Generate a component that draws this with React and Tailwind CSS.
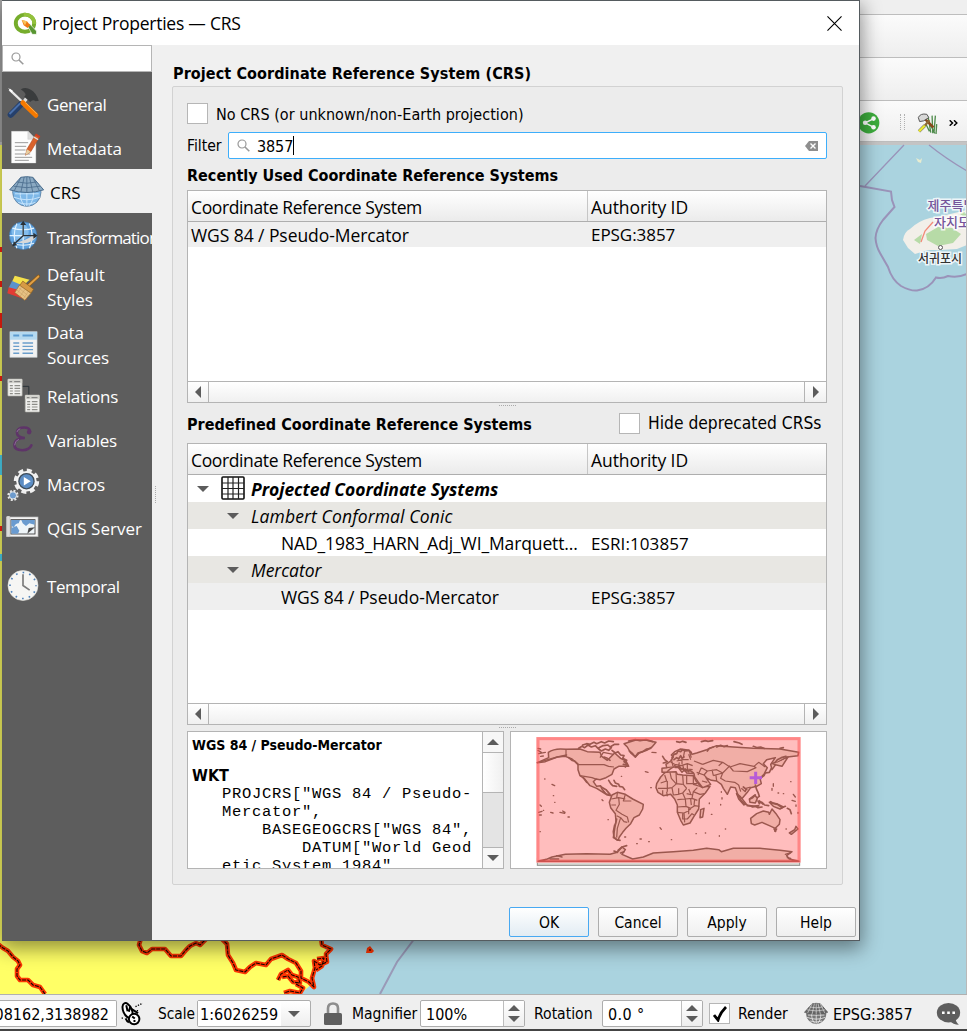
import React from "react";

const UI = "font-['Open_Sans','Noto_Sans',sans-serif]";
const TA = "font-['DejaVu_Sans_Condensed','DejaVu_Sans',sans-serif] [font-stretch:condensed]";

/* ---------- sidebar icons, 3 units per pixel ---------- */
function Tools() {
  return (
    <svg viewBox="18 258 104 102" className="w-[35px] h-[34px]">
      <path d="M28 269 L80 318" stroke="#e9e9e9" strokeWidth="7" />
      <path d="M24 264 l14 8 -4 6z" fill="#fff" />
      <path d="M68 310 L86 286" stroke="#ddd" strokeWidth="10" />
      <path d="M62 268 Q76 260 92 269 Q108 278 116 302 L106 304 Q98 296 90 306 L72 290 Q84 284 62 268Z" fill="#3a3c3d" />
      <path d="M32 344 L62 313" stroke="#26406b" strokeWidth="19" strokeLinecap="round" />
      <path d="M28 342 L60 310" stroke="#4a70ab" strokeWidth="6" />
      <path d="M68 308 L107 346" stroke="#f57900" strokeWidth="15" strokeLinecap="round" />
      <path d="M76 308 L110 342" stroke="#ffb14d" strokeWidth="3" />
    </svg>
  );
}
function Doc() {
  return (
    <svg viewBox="18 390 104 102" className="w-[35px] h-[34px]">
      <path d="M34 394 H84 L107 418 V489 H34Z" fill="#fcfcfc" stroke="#e0e0e0" />
      <path d="M83 394 V418 H107Z" fill="#ddd" stroke="#bbb" />
      <path d="M44 428 H84 M44 439 H78 M44 450 H76 M44 462 H90 M44 472 H96 M44 481 H86" stroke="#9b9b9b" strokeWidth="3" />
      <path d="M76 466 L80 448 L106 404 L118 411 L92 455Z" fill="#d9622b" stroke="#a8441c" strokeWidth="1.5" />
      <path d="M76 466 L80 448 L92 455Z" fill="#e6cfa2" />
      <path d="M101 411 L114 419" stroke="#ddd" strokeWidth="4" />
      <path d="M106 403 l13 8" stroke="#cf3d23" strokeWidth="6" />
    </svg>
  );
}
function CrsGlobe({ gray }) {
  const a = gray ? "#777" : "#7eb8e8";
  const b = gray ? "#666" : "#8aa9c2";
  const s = gray ? "#565656" : "#4a6c8d";
  const l = gray ? "#ededed" : "#d3ecff";
  return (
    <svg viewBox="24 524 106 98" className={gray ? "w-[24px] h-[23px]" : "w-[35px] h-[33px]"}>
      <circle cx="78" cy="575" r="43" fill={a} stroke={s} strokeWidth="2" />
      <path d="M38 590 Q78 606 118 590 M52 606 Q78 616 104 606 M78 570 V617 M58 572 Q56 600 72 617 M98 572 Q100 600 84 617 M42 580 H114" fill="none" stroke={l} strokeWidth={gray ? 3.5 : 2.5} />
      <path d="M60 530 Q78 526 96 530 L129 568 Q104 576 78 576 Q52 576 26 568Z" fill={b} stroke={s} strokeWidth="3" />
      <path d="M48 544 Q78 552 108 544 M38 557 Q78 566 118 557 M70 529 L60 575 M86 529 L96 575 M78 529 V576 M60 530 L40 571 M96 530 L116 571" fill="none" stroke={gray ? "#dcdcdc" : s} strokeWidth={gray ? 3 : 2.5} />
    </svg>
  );
}
function Transform() {
  return (
    <svg viewBox="20 12 100 96" className="w-[33px] h-[32px]">
      <circle cx="69" cy="59" r="42" fill="#5ea0dc" stroke="#3d6c9c" strokeWidth="2" />
      <circle cx="60" cy="48" r="26" fill="#9fd0f7" opacity=".6" />
      <path d="M28 59 H110 M36 36 Q69 46 102 36 M36 82 Q69 94 102 82 M69 18 V100 M50 22 Q34 58 50 97 M88 22 Q104 58 88 97" fill="none" stroke="#e2f3ff" strokeWidth="3.5" />
      <path d="M46 80 Q76 74 96 60 L110 60 Q98 82 70 82Z" fill="#d8d8d8" />
      <path d="M69 24 V59 L44 82 M69 59 H106" fill="none" stroke="#2a3238" strokeWidth="4" />
      <path d="M69 14 l9 13 h-18z M113 59 l-13 9 v-18z M36 91 l5 -15 10 12z" fill="#2a3238" />
    </svg>
  );
}
function Brush() {
  return (
    <svg viewBox="16 170 104 86" className="w-[35px] h-[29px]">
      <path d="M42 178 L86 190 L62 212 L34 196Z" fill="#f4e04a" />
      <path d="M34 194 L64 206 L50 222 L24 214Z" fill="#5b93cc" />
      <path d="M24 212 L52 220 L78 250 L20 230Z" fill="#e23b34" />
      <path d="M82 208 L112 180" stroke="#8a5713" strokeWidth="10" strokeLinecap="round" />
      <path d="M82 208 L112 180" stroke="#e0a047" strokeWidth="6" strokeLinecap="round" />
      <path d="M66 194 L98 218 L90 230 L56 208Z" fill="#d69a45" stroke="#8f601e" strokeWidth="2" />
      <path d="M56 206 L90 230 L72 251 L42 228Z" fill="#e7c184" stroke="#9c6f2d" strokeWidth="2" />
      <path d="M54 214 l26 22 M48 220 l26 22 M62 212 l-12 18 M72 219 l-14 20 M82 226 l-14 20" stroke="#c39a60" strokeWidth="1.5" />
    </svg>
  );
}
function TableIcon() {
  return (
    <svg viewBox="22 342 94 90" className="w-[31px] h-[30px]">
      <rect x="28" y="347" width="82" height="77" fill="#f2f2f2" stroke="#cfd6da" strokeWidth="2" />
      <rect x="28" y="347" width="82" height="24" fill="#b4d9f0" />
      <path d="M38 358 H56 M66 358 H98" stroke="#5b9bd0" strokeWidth="6" />
      <path d="M38 381 H56 M66 381 H98 M38 391 H56 M66 391 H98 M38 401 H56 M66 401 H98 M38 412 H56 M66 412 H98" stroke="#6b9ecb" strokeWidth="4" />
    </svg>
  );
}
function Sheet() {
  return (
    <>
      <rect x="23" y="491" width="43" height="51" rx="2" fill="#f0f0ee" stroke="#a5a59d" strokeWidth="2" />
      <path d="M23 498 H66" stroke="#d4d4ce" strokeWidth="11" />
      <path d="M28 499 H36 M42 499 H60" stroke="#777" strokeWidth="3" />
      <path d="M29 511 H38 M43 511 H60 M29 519 H38 M43 519 H60 M29 527 H38 M43 527 H60 M29 535 H38 M43 535 H60" stroke="#8d8d88" strokeWidth="3.5" />
    </>
  );
}
function Relations() {
  return (
    <svg viewBox="18 488 104 108" className="w-[35px] h-[36px]">
      <path d="M66 513 H86 V540" fill="none" stroke="#2b3338" strokeWidth="3" />
      <Sheet />
      <g transform="translate(52 48)"><Sheet /></g>
    </svg>
  );
}
function Variables() {
  return (
    <svg viewBox="32 32 76 84" className="w-[25px] h-[28px]">
      <path d="M90 48 Q88 36 72 36 Q52 36 50 50 Q49 65 74 68 Q44 68 42 88 Q42 105 66 105 Q88 105 94 90" fill="none" stroke="#5e3468" strokeWidth="8" strokeLinecap="round" />
      <circle cx="87" cy="50" r="7" fill="#5e3468" />
      <path d="M43 90 Q44 76 56 72 M50 50 Q52 42 60 40" fill="none" stroke="#a488ad" strokeWidth="2" />
    </svg>
  );
}
function Macros() {
  return (
    <svg viewBox="16 150 106 106" className="w-[35px] h-[35px]">
      <circle cx="78" cy="193" r="33" fill="none" stroke="#efefef" strokeWidth="11" strokeDasharray="15 10.92" />
      <circle cx="78" cy="193" r="31" fill="#f3f3f3" />
      <circle cx="78" cy="193" r="23" fill="#5c8dc4" stroke="#3e4b57" strokeWidth="4" />
      <path d="M70 180 L91 193 L70 206Z" fill="#fff" />
      <circle cx="37" cy="236" r="14" fill="none" stroke="#e8e8e8" strokeWidth="6" strokeDasharray="6 5" />
      <circle cx="37" cy="236" r="11" fill="#6d9bcd" stroke="#e8e8e8" strokeWidth="3" />
    </svg>
  );
}
function Server() {
  return (
    <svg viewBox="20 300 102 72" className="w-[34px] h-[24px]">
      <rect x="22" y="303" width="94" height="59" fill="#f4f4f4" stroke="#b9b9b9" strokeWidth="2" />
      <rect x="22" y="300" width="10" height="62" rx="3" fill="#dcdcdc" stroke="#aaa" />
      <rect x="35" y="311" width="72" height="43" fill="#eef4f8" stroke="#333" strokeWidth="2.5" />
      <path d="M36 312 H62 L58 322 Q48 322 44 334 L36 330Z M36 336 L52 330 L60 344 L56 353 H36Z M66 312 H106 V326 L90 322 L80 330 L70 322Z" fill="#6a9bd0" />
      <path d="M84 353 L88 336 L107 334Z" fill="#4a4a4a" />
    </svg>
  );
}
function Clock() {
  return (
    <svg viewBox="18 461 102 104" className="w-[34px] h-[35px]">
      <circle cx="69" cy="510" r="45" fill="#f6f6f4" stroke="#e4e4e0" strokeWidth="2" />
      <circle cx="69" cy="510" r="39" fill="none" stroke="#4b7fb8" strokeWidth="5" strokeDasharray="5 15.42" strokeDashoffset="2.5" />
      <path d="M69 476 V510 L89 524" fill="none" stroke="#7b7b7b" strokeWidth="5" />
    </svg>
  );
}
function Search() {
  return (
    <svg viewBox="0 0 13 13" className="w-[13px] h-[13px] shrink-0">
      <circle cx="5" cy="5" r="4" fill="none" stroke="#999" strokeWidth="1.2" />
      <path d="M8 8 L12.3 12.3" stroke="#999" strokeWidth="1.6" />
    </svg>
  );
}
function Logo() {
  return (
    <svg viewBox="38 30 72 70" className="w-[24px] h-[23px] shrink-0">
      <ellipse cx="74" cy="64" rx="28" ry="26" fill="none" stroke="#76ad2c" strokeWidth="12" />
      <path d="M70 38 A28 26 0 0 1 102 66" fill="none" stroke="#93c13c" strokeWidth="11" />
      <path d="M80 70 L88 66 L109 88 V98 H96Z" fill="#589632" stroke="#fff" strokeWidth="2" />
      <path d="M64 54 L80 58 L90 70 L82 79 L70 70Z" fill="#ee7913" />
      <path d="M64 54 L80 58 L74 70Z" fill="#f8c35a" />
    </svg>
  );
}

function Tri({ d }) {
  const p = { left: "M6 0 V12 L0 6Z", right: "M0 0 V12 L6 6Z", up: "M0 6 H12 L6 0Z", down: "M0 0 H12 L6 6Z" }[d];
  const v = d === "left" || d === "right";
  return (
    <svg viewBox={v ? "0 0 6 12" : "0 0 12 6"} className={v ? "w-[6px] h-[12px] shrink-0" : "w-[12px] h-[6px] shrink-0"}>
      <path d={p} fill="#5c5c5c" />
    </svg>
  );
}

function Item({ icon, children, cls = "h-[44px]", text = "text-white" }) {
  return (
    <div className={`flex shrink-0 items-center overflow-hidden ${cls}`}>
      <div className="ml-[1px] flex w-[40px] shrink-0 justify-center">{icon}</div>
      <div className={`ml-[4px] whitespace-nowrap text-[17px] leading-[25px] ${text}`}>{children}</div>
    </div>
  );
}

function Header() {
  return (
    <div className="flex h-[31px] shrink-0 items-center border-b border-[#aeaeae] bg-linear-to-b from-white to-[#ebebeb] text-[17.5px] leading-[24px]">
      <div className="flex h-full w-[400px] items-center border-r border-[#c6c6c6] pl-[3px] pt-[1px] tracking-[-0.38px]">Coordinate Reference System</div>
      <div className="pl-[3px] pt-[1px] tracking-[-0.08px]">Authority ID</div>
    </div>
  );
}
function HScroll() {
  return (
    <div className="mt-auto flex h-[21px] shrink-0 border-t border-[#b4b4b4] bg-linear-to-b from-white to-[#f0f0f0]">
      <div className="flex w-[21px] items-center justify-center border-r border-[#b4b4b4] pr-px"><Tri d="left" /></div>
      <div className="flex-1" />
      <div className="flex w-[22px] items-center justify-center border-l border-[#b4b4b4]"><Tri d="right" /></div>
    </div>
  );
}
function Dots() {
  return <div className="mx-auto h-[2px] w-[17px] border-t border-dotted border-[#aaa]" />;
}
function Check({ on }) {
  return (
    <div className="flex h-[21px] w-[21px] shrink-0 items-center justify-center border border-[#b6b6b6] bg-white">
      {on && (
        <svg viewBox="0 0 14 16" className="h-[16px] w-[14px]"><path d="M1 9 L5 14 Q7 7 13 1" fill="none" stroke="#000" strokeWidth="2.8" /></svg>
      )}
    </div>
  );
}
function Button({ children, primary }) {
  return (
    <div className={`flex h-[30px] w-[80px] shrink-0 items-center justify-center rounded-[2px] border pt-[3px] text-[15.5px] ${TA} ${primary ? "border-[#48a9f2] bg-linear-to-b from-white to-[#e2ecf3]" : "border-[#adadad] bg-linear-to-b from-white to-[#efefef]"}`}>{children}</div>
  );
}
function Spin({ children, cls }) {
  return (
    <div className={`flex h-[27px] shrink-0 overflow-hidden rounded-[2px] border border-[#adadad] bg-white text-[16px] ${cls}`}>
      <div className="flex flex-1 items-center pl-[5px] pt-[2px]">{children}</div>
      <div className="flex w-[21px] flex-col items-center justify-center gap-[5px] border-l border-[#bdbdbd] bg-linear-to-b from-white to-[#eee]"><Tri d="up" /><Tri d="down" /></div>
    </div>
  );
}

/* ---------- overview map, 3 units per pixel ---------- */
function WorldMap() {
  return (
    <svg viewBox="33 21 945 408" className="h-[136px] w-[315px]">
      <rect x="112" y="400" width="787" height="21" fill="#d9d9d4" stroke="#8f8f8b" strokeWidth="3" />
      <rect x="109" y="36" width="793" height="377" fill="#ffbdbd" />
      <g fill="#f1aea6" stroke="#9b574e" strokeWidth="4.5" strokeLinejoin="round">
        <path d="M145 82 Q165 68 198 73 L240 72 L262 80 L300 82 L305 94 L322 106 L332 96 L344 84 L362 100 L378 108 L386 124 L356 124 L342 132 L336 148 L318 158 L300 164 L288 162 L280 170 L290 184 L302 182 L306 192 L318 206 L334 212 L322 210 L290 190 L270 182 L252 160 L240 152 L234 134 L234 118 L216 102 L196 94 L172 96 L136 110 L112 113 L146 98Z" />
        <path d="M372 56 L410 44 L440 46 L468 52 L456 66 L440 76 L418 84 L406 96 L392 84 L382 66Z" />
        <path d="M336 210 L352 202 L376 208 L398 222 L430 238 L428 252 L418 270 L402 278 L392 296 L378 310 L368 322 L358 336 L354 346 L340 338 L344 312 L348 288 L346 266 L332 248 L328 232Z" />
        <path d="M470 176 L482 156 L496 142 L528 140 L532 148 L548 150 L580 152 L588 168 L604 186 L630 184 L616 204 L598 222 L596 252 L582 274 L570 294 L550 300 L542 286 L532 262 L532 240 L524 222 L512 208 L490 212 L474 202 L468 188Z" />
        <path d="M602 254 L612 250 L608 276 L600 278Z" />
        <path d="M486 142 L486 130 L500 128 L498 118 L512 108 L520 96 L514 90 L524 80 L542 72 L568 76 L576 88 L590 84 L620 74 L650 62 L700 66 L760 70 L840 72 L896 82 L894 92 L862 96 L832 112 L816 134 L812 118 L826 98 L800 104 L790 116 L802 128 L792 148 L780 160 L784 176 L770 184 L752 188 L742 202 L730 216 L722 226 L714 210 L706 188 L692 186 L682 208 L670 190 L664 178 L650 168 L634 166 L618 158 L626 170 L632 178 L608 188 L594 170 L584 156 L582 146 L560 144 L554 134 L546 142 L534 126 L520 126 L508 134 L500 142Z" />
        <path d="M752 280 L770 266 L790 258 L806 262 L808 268 L816 252 L828 266 L840 284 L838 298 L826 310 L808 302 L786 292 L764 300 L754 296Z" />
        <path d="M822 312 l8 0 l-4 7z M888 304 L894 312 L874 328 L868 324 L884 314Z M858 102 L864 96 L846 124 L820 118" />
        <path d="M114 409 L142 402 L156 396 L196 388 L260 386 L330 388 L352 382 L366 366 L376 374 L366 388 L398 402 L430 396 L460 384 L520 380 L580 376 L620 370 L656 374 L664 380 L700 370 L780 370 L840 376 L876 380 L860 392 L868 402 L897 409Z" />
        <path d="M710 206 L720 214 L738 236 L732 240 L716 222Z M748 222 L764 210 L772 220 L766 234 L750 232Z M740 242 L770 244 M776 226 L790 238 M808 232 L830 236 L850 246 L840 252 L820 244Z" />
      </g>
      <g fill="none" stroke="#9b574e" strokeWidth="3.6" strokeLinejoin="round">
        <path d="M198 73 V96 M236 119 H312 L326 124 L342 126 M240 152 L276 158 L292 164 M300 98 L310 82 L340 88" />
        <path d="M334 222 L356 218 L376 222 M356 218 L358 238 L348 256 L366 268 L382 276 L386 292 M350 272 L362 278 L372 290 L382 292 M362 278 L352 310 L350 338 M352 204 L350 220 M376 208 L370 228 L394 228 M334 240 L348 240" />
        <path d="M494 150 L500 168 L482 174 M510 142 L514 160 L528 176 L548 178 M528 142 L530 176 M548 150 L550 178 L560 190 M580 152 L580 178 L606 186 M560 152 V176 H592 M474 190 L502 190 L516 188 L530 176 M502 168 V200 M516 188 L520 210 L534 208 L548 204 L560 190 M488 196 V212 M500 200 L502 214 M548 204 L556 222 L576 220 L580 200 L592 188 M532 224 L556 222 L558 244 L532 246 M558 244 L572 250 L584 242 L598 244 M532 262 L552 264 L560 260 L572 252 M548 264 V282 L562 282 L576 266 L582 270 M576 220 L592 226 M580 200 L600 208 L614 206 M536 190 L536 206 M566 192 L572 206 M566 250 L566 268 M552 264 L554 292 M584 222 L582 242 M560 206 L578 210 M572 222 L574 240" />
        <path d="M608 118 L640 106 L668 112 L690 126 L720 116 L762 124 L776 112 L796 126 M604 128 L622 138 L650 134 L668 144 L690 122 M612 150 L622 138 M612 150 L620 158 M640 152 L668 144 L662 160 L676 168 L704 172 L716 180 M690 126 L700 138 L742 140 L768 128 L762 124 M594 150 L604 128 M590 142 L612 150 M582 108 L608 118 M650 168 L648 152 M640 152 L636 134 M668 112 L656 122 M606 168 L622 172 M716 180 L722 200 M724 190 L736 200 L738 190 L752 186" />
        <path d="M514 102 L520 128 M524 118 L544 122 L562 116 L578 122 M530 108 L548 104 L566 104 M536 120 L540 132 L556 134 M548 120 L552 134 M562 116 L562 132 L578 134 M500 128 L516 126 M546 104 V118 M572 104 L566 88 M554 76 L550 98 M568 78 L574 98 M524 128 L536 128 M538 112 L536 122 M512 112 L524 118" />
      </g>
      <g fill="none" stroke="#9b574e" strokeWidth="5" strokeLinecap="round" strokeLinejoin="round">
        <path d="M236 70 l10 -6 8 4 10 -8 10 6 12 -4 8 8 14 -8 M248 60 l12 -4 10 2 12 -6 8 4 14 -6 10 4 12 -6 14 2 M296 72 l8 6 12 -6 10 4 8 -8 M310 62 l14 -2 6 6 14 -8 12 0 M336 76 l10 8 8 -4 8 10 10 2 -4 8 12 6 -8 4 10 8 M312 96 l10 4 8 6" />
        <path d="M386 48 l20 -4 14 3 18 -3 20 6 M388 78 l10 8 8 10 8 -12 14 -4 12 -8 12 -2 M370 118 l12 2 -6 6" />
        <path d="M516 98 l6 -10 8 -2 4 -8 8 2 6 -6 8 4 10 -2 8 6 M522 104 l8 -6 6 4 6 -10 4 8 6 -4 M524 122 l6 4 8 -2 6 8 6 -2 4 8 8 -4 4 6 M556 132 l6 6 8 -2 10 8" />
        <path d="M530 50 l10 2 8 -3 10 3 M604 50 l12 -3 8 2 14 -2 M622 78 l6 -8 12 -4 M650 66 l12 -5 10 4 10 -3 M702 50 l16 4 8 4 M760 64 l12 4 10 -2 10 4 M840 70 l10 -2 M206 98 l10 8 8 2 10 10" />
        <path d="M342 166 l4 8 10 4 2 6 10 2 6 8 M326 166 l6 10 6 6 12 2 M250 158 l10 14 M304 186 l14 8 12 14 M344 300 l-4 20 2 16 8 8 10 2 M350 282 l-4 16" />
        <path d="M710 206 l8 10 6 12 12 10 12 4 14 2 14 -2 M766 180 l4 14 4 8 4 12 -6 4 M750 222 l8 -4 8 -8 M774 228 l4 8 4 -6 M786 232 l6 6 M794 240 l12 2 M812 230 l10 6 10 2 14 10 10 -4 M730 186 l10 8 M862 250 l8 4 4 12 M750 242 l8 4 8 -2 8 4 12 -2" />
        <path d="M488 94 l6 10 8 6 M490 114 l8 -2 M786 156 l6 -4 4 -8 12 -2 6 -12 M816 116 l10 -4 6 -8 12 -6 14 -4 M354 376 l12 -10 14 -4 M362 384 l10 -4 M342 378 l10 4" />
      </g>
      <g fill="none" stroke="#9b574e" strokeWidth="4" strokeLinecap="round">
        <path d="M114 70 l8 2 M116 86 l20 -4 M114 76 l10 6 M122 94 l8 -1 M112 113 L172 96 L200 90 M120 240 l4 4 M116 262 l10 -3 M118 270 h6 M130 256 h1 M152 262 l7 2 M180 262 l14 3 M188 258 l7 4 M204 276 h4 M156 178 l8 4 M134 162 h1 M160 212 h1 M164 232 h1 M306 224 l3 3 M436 140 l8 2 M452 188 h2 M364 154 h1 M456 82 l12 1 M628 234 v2 M634 268 h2 M658 332 v2 M588 326 h1 M616 324 h1 M514 344 h1 M480 308 l4 5 M374 336 h3 M420 342 h4 M446 350 h2 M410 356 h2 M664 200 v2 M666 218 v4 M820 176 v8 M816 190 v6 M834 204 h2 M850 206 h1 M880 208 l6 8 M876 226 l10 3 M888 240 v4 M894 262 v3 M858 312 h1 M872 170 h1 M824 318 l3 2 M150 402 l26 0 M170 392 l16 4 M870 384 l-14 4 M862 398 l10 2 M324 284 h1 M120 320 h1 M662 238 v2 M676 312 h1" />
      </g>
      <rect x="114" y="41" width="783" height="367" fill="none" stroke="#ff5050" strokeOpacity=".5" strokeWidth="9" />
      <path d="M767 140 V177 M749 158 H786" stroke="#b75bd8" strokeWidth="9" />
    </svg>
  );
}

/* ---------- main map canvas, page units ---------- */
function MapCanvas() {
  const coast = [
    "M-2 944 L3 948 L8 951 L13 957 L18 961 L20 965 L17 969 L17 976 L20 980 L28 980 L33 985 L40 987 L45 994",
    "M141 938 L139 945 L142 951 L147 953 L152 949 L165 949 L171 956 L181 956 L186 950 L190 946 L196 943 L200 945 L206 939",
    "M221 938 L227 944 L228 955 L233 963 L236 970 L245 972 L250 967 L256 963 L266 965 L271 959 L282 955 L288 959 L296 963 L301 971 L301 978 L309 982 L314 987 L312 978 L315 968 L314 961 L320 965 L327 962 L326 954 L331 949 L322 945 L321 938",
    "M278 980 L281 974 L288 970 L292 975 L298 977 L300 983 L293 982 L288 976 L282 977",
    "M296 984 L303 988 L300 993 L290 991 L284 993",
    "M317 959 L324 958 L322 966 L316 970",
  ];
  return (
    <svg viewBox="0 142 967 852" className="h-full w-full">
      <rect x="0" y="142" width="967" height="3" fill="#c4c4c4" />
      <rect x="0" y="145" width="967" height="849" fill="#aad3df" />
      <path d="M0 145 H320 V938 L328 955 L318 964 L312 984 L300 994 H0Z" fill="#ffff66" />
      <g fill="none" strokeLinejoin="round">
        {coast.map((d) => <path key={d} d={d} stroke="#fc3503" strokeWidth="4.6" />)}
        {coast.map((d) => <path key={d} d={d} stroke="#1a0500" strokeWidth="1.1" strokeDasharray="4 1" />)}
      </g>
      <path d="M366 953 l1 -5 3 -2 4 5 -2 2z" fill="#fc3503" />
      <path d="M369 950 h2" stroke="#000" />
      <path d="M415 938 L397 962 L380 994" fill="none" stroke="#9a9ab8" strokeWidth="2" />
      <g fill="none" stroke="#9a93b9">
        <path d="M860 186 L891 191.5 L892 200 L894.5 207 L883 220 Q876 229 875.5 238 Q876 246 880 253 L888 267 Q892 280 901 286 Q910 291 917 290.500 Q929 289 936 277.500 Q942 279 948 276 Q958 278 967 274" strokeWidth="2" />
        <path d="M865 186 L904 145 M929 145 Q945 158 967 171" strokeWidth="1.3" />
      </g>
      <path d="M916 158 l4 2 2 -2 -1 5 -3 -1z" fill="#e7ecd0" />
      <path d="M903 240 Q904 232 910 229 Q918 221 930 218 L942 216 L967 210 V245 L957 249 L940 250 L928 250 L915 254 L908 248Z" fill="#f2efe9" />
      <path d="M926 234 L938 227 L952 228 L961 234 L953 243 L938 246 L927 240Z M960 214 l7 -3 v8z M914 240 l8 -6 -2 10z" fill="#b7dba7" />
      <path d="M921 242 L925 231 L933 222" fill="none" stroke="#f28a79" strokeWidth="1.3" />
      <circle cx="940.5" cy="247.5" r="2" fill="#fff" stroke="#555" />
      <g className="font-['Noto_Sans_CJK_KR',sans-serif] font-medium" stroke="#fff" strokeWidth="3" strokeOpacity=".8" paintOrder="stroke" fontSize="13">
        <text x="927.5" y="210" fill="#75549a">제주특별</text>
        <text x="934" y="227" fill="#75549a">자치도</text>
        <text x="918" y="262.5" fill="#333" fontSize="12">서귀포시</text>
      </g>
      <path d="M0 247 h2 v5 h-2z M0 281 h2 v6 h-2z M0 313 h2 v15 h-2z M0 376 h2 v5 h-2z M0 526 h2 v5 h-2z" fill="#ff2010" />
      <path d="M0 455 h2 v20 h-2z M0 554 h2 v7 h-2z" fill="#4fdcfa" />
      <rect x="966" y="144" width="1" height="850" fill="#b9b9b9" />
    </svg>
  );
}

function ToolRow({ children, cls }) {
  return <div className={`flex shrink-0 items-center border-b border-[#bdbdbd] bg-linear-to-b from-[#fbfbfb] to-[#eeeeee] ${cls}`}>{children}</div>;
}

export default function App() {
  return (
    <div className={`relative flex h-[1031px] w-[967px] flex-col overflow-hidden bg-[#efefef] text-black ${UI}`}>
      <div className="h-[15px] shrink-0 border-b border-[#bdbdbd]" />
      <ToolRow cls="h-[43px]" />
      <ToolRow cls="h-[43px]" />
      <ToolRow cls="h-[41px] pl-[858px]">
        <svg viewBox="234 330 68 70" className="mt-[2px] h-[23px] w-[22px] shrink-0">
          <circle cx="267" cy="366" r="33" fill="#3dad3d" />
          <path d="M283 353 L256 366 L283 380" fill="none" stroke="#fff" strokeWidth="4.5" />
          <circle cx="282" cy="353" r="7" fill="#fff" /><circle cx="256" cy="366" r="7" fill="#fff" /><circle cx="282" cy="380" r="7" fill="#fff" />
        </svg>
        <div className="ml-[20px] mt-[2px] h-[16px] w-[5px] shrink-0 border-x border-dotted border-[#b0b0b0]" />
        <svg viewBox="410 336 64 68" className="ml-[12px] mt-[4px] h-[23px] w-[21px] shrink-0">
          <path d="M444 350 L452 398 M456 346 L458 400 M450 372 L464 400 M466 346 L462 396 M470 372 L468 402 M438 374 L448 394" stroke="#4d8a4a" strokeWidth="4" fill="none" />
          <path d="M424 346 L460 382" stroke="#8a4a1c" strokeWidth="8" />
          <path d="M414 352 Q420 338 440 342 L446 352 L430 362 L418 364Z" fill="#d8d8d8" stroke="#555" strokeWidth="3" />
          <path d="M416 394 L434 376" stroke="#777" strokeWidth="10" /><path d="M416 394 L434 376" stroke="#ece82d" strokeWidth="7" />
          <path d="M434 376 L448 360" stroke="#8c6b35" strokeWidth="7" />
        </svg>
        <svg viewBox="0 0 9 6" className="ml-[11px] mt-[3px] h-[6px] w-[9px] shrink-0"><path d="M.7 .3 L3.5 3 L.7 5.7 M5 .3 L7.8 3 L5 5.7" fill="none" stroke="#000" strokeWidth="1.5" /></svg>
      </ToolRow>
      <div className="h-[852px] shrink-0"><MapCanvas /></div>

      <div className={`flex h-[35px] shrink-0 items-center border-t border-[#b0b0b0] pt-[3px] ${TA} whitespace-nowrap text-[15.6px]`}>
        <div className="flex h-[27px] w-[117px] shrink-0 items-center justify-end overflow-hidden rounded-r-[2px] border border-l-0 border-[#adadad] bg-white pr-[7px] pt-[2px] text-[16px]">08162,3138982</div>
        <svg viewBox="364 240 70 74" className="ml-[4px] h-[25px] w-[23px] shrink-0">
          <ellipse cx="384" cy="268" rx="13" ry="24" transform="rotate(-24 384 268)" fill="#fff" stroke="#000" strokeWidth="6" />
          <path d="M380 252 L384 270 M392 256 L388 272" stroke="#000" strokeWidth="6" />
          <circle cx="404" cy="294" r="16" fill="#fff" stroke="#000" strokeWidth="6" />
          <path d="M398 286 l8 6 M402 300 h6 M378 292 q4 10 10 12 M394 262 l22 14" stroke="#000" strokeWidth="6" fill="none" />
          <path d="M408 256 L430 246 M366 290 l4 2 M412 268 h6" stroke="#000" strokeWidth="4" strokeDasharray="4 4" />
        </svg>
        <div className="ml-[14px] w-[39px] pt-[2px] text-[15.3px]">Scale</div>
        <div className="flex h-[27px] w-[114px] shrink-0 items-center rounded-[2px] border border-[#adadad] bg-linear-to-b from-white to-[#eee]">
          <div className="flex h-full w-[83px] items-center bg-white pl-[2px] pt-[2px] text-[16px]">1:6026259</div>
          <div className="ml-[7px] flex"><Tri d="down" /></div>
        </div>
        <svg viewBox="0 0 18 23" className="ml-[13px] h-[23px] w-[18px] shrink-0">
          <path d="M4 12 V6.500 Q4 1.500 9 1.500 Q14 1.500 14 6.500 V12" fill="none" stroke="#8d8d8d" strokeWidth="2.6" />
          <rect x="0" y="11" width="18" height="12" rx="1.5" fill="#5f5f5f" />
        </svg>
        <div className="ml-[10px] w-[68px] pt-[2px] text-[15.5px]">Magnifier</div>
        <Spin cls="w-[105px]">100%</Spin>
        <div className="ml-[9px] w-[68px] pt-[2px]">Rotation</div>
        <Spin cls="w-[101px]"><span className="tracking-[0.4px]">0.0 °</span></Spin>
        <div className="ml-[6px]"><Check on /></div>
        <div className="ml-[8px] w-[66px] pt-[2px]">Render</div>
        <CrsGlobe gray />
        <div className="ml-[5px] w-[103px] pt-[2px] text-[16px]">EPSG:3857</div>
        <svg viewBox="1366 334 76 74" className="h-[24px] w-[25px] shrink-0">
          <ellipse cx="1404" cy="367" rx="36" ry="30" fill="#5e5e5e" />
          <path d="M1408 392 Q1418 404 1436 404 Q1426 396 1426 384Z" fill="#5e5e5e" />
          <path d="M1384 367 h8 M1400 367 h8 M1416 367 h8" stroke="#fff" strokeWidth="8" />
        </svg>
      </div>
      <div className="h-[2px] shrink-0 bg-[#444]" />
      <div className="absolute left-0 top-0 h-[142px] w-[2px] bg-[#a8a8a8]" />

      {/* dialog window */}
      <div className="absolute left-[2px] top-0 flex h-[941px] w-[858px] flex-col border-y border-r border-[#555b5f] bg-[#f0f0f0] shadow-[0_6px_18px_2px_rgba(0,0,0,0.42)]">
        <div className="flex h-[44px] shrink-0 items-center bg-white pl-[11px] pr-[17px]">
          <Logo />
          <div className="ml-[5px] pt-[1px] text-[17.5px] tracking-[-0.24px]">Project Properties — CRS</div>
          <svg viewBox="0 0 16 16" className="ml-auto h-[15px] w-[15px]"><path d="M.5 .5 L15.5 15.5 M15.5 .5 L.5 15.5" stroke="#000" strokeWidth="1.2" /></svg>
        </div>
        <div className="flex min-h-0 flex-1">
          <div className="flex w-[150px] shrink-0 flex-col overflow-hidden bg-[#5d5d5d]">
            <div className="mb-[9px] flex h-[27px] shrink-0 items-center border border-[#b5b5b5] bg-white pl-[8px]"><Search /></div>
            <Item icon={<Tools />} text="text-white tracking-[-0.45px] pt-[2px]">General</Item>
            <Item icon={<Doc />} text="text-white tracking-[-0.1px] pt-[2px]">Metadata</Item>
            <Item icon={<CrsGlobe />} cls="h-[44px] bg-[#f0f0f0] pl-[3px]" text="text-black pt-[2px]">CRS</Item>
            <Item icon={<Transform />} cls="h-[45px]" text="text-white pt-[3px] tracking-[-0.85px]">Transformation</Item>
            <Item icon={<Brush />} cls="h-[58px]">Default<br />Styles</Item>
            <Item icon={<TableIcon />} cls="h-[58px]" text="text-white tracking-[-0.1px]">Data<br />Sources</Item>
            <Item icon={<Relations />} text="text-white tracking-[-0.18px]">Relations</Item>
            <Item icon={<Variables />} text="text-white tracking-[-0.3px]">Variables</Item>
            <Item icon={<Macros />}>Macros</Item>
            <Item icon={<Server />}>QGIS Server</Item>
            <Item icon={<Clock />} cls="mt-[14px] h-[44px]" text="text-white tracking-[-0.4px]">Temporal</Item>
          </div>
          <div className="flex w-[20px] shrink-0 pl-[3px] pt-[441px]"><div className="h-[17px] border-l border-dotted border-[#aaa]" /></div>
          <div className="flex w-[671px] flex-col">
            <div className={`flex h-[41px] shrink-0 items-center pl-[1px] pt-[17px] text-[16px] font-bold tracking-[0.09px] ${TA}`}>Project Coordinate Reference System (CRS)</div>
            <div className="flex h-[799px] shrink-0 flex-col rounded-[2px] border border-[#d2d2d2] bg-[#ececec] pl-[14px] pr-[15px] pt-[16px]">
              <div className={`flex h-[21px] shrink-0 items-center text-[16px] tracking-[0.04px] ${TA}`}><Check /><span className="ml-[8px] pt-[3px]">No CRS (or unknown/non-Earth projection)</span></div>
              <div className={`mt-[8px] flex h-[27px] shrink-0 items-center text-[16px] ${TA}`}>
                <div className="w-[41px] pt-[3px] text-[15.6px]">Filter</div>
                <div className="flex h-[27px] flex-1 items-center rounded-[2px] border border-[#3daefb] bg-white pl-[8px] pr-[7px]">
                  <Search />
                  <span className="ml-[7px] pt-[3px] tracking-[-0.1px]">3857</span>
                  <div className="h-[19px] w-px bg-black" />
                  <svg viewBox="0 0 14 10" className="ml-auto h-[10px] w-[14px]"><path d="M4 0 H13 V10 H4 L0 5Z" fill="#8e8e8e" /><path d="M5.500 2.500 l5 5 M10.500 2.500 l-5 5" stroke="#fff" strokeWidth="1.4" /></svg>
                </div>
              </div>
              <div className={`flex h-[31px] shrink-0 items-center pt-[2px] text-[16px] font-bold ${TA}`}>Recently Used Coordinate Reference Systems</div>
              <div className="flex h-[213px] shrink-0 flex-col border border-[#b4b4b4] bg-white">
                <Header />
                <div className="flex h-[25px] items-center bg-[#efefef] pl-[3px] pt-[1px] text-[17.5px] tracking-[-0.07px]"><span className="w-[400px]">WGS 84 / Pseudo-Mercator</span><span className="text-[17px] tracking-[-0.05px]">EPSG:3857</span></div>
                <HScroll />
              </div>
              <div className="flex h-[4px] shrink-0 items-end"><Dots /></div>
              <div className="flex h-[36px] shrink-0 items-center justify-between pr-[5px]">
                <div className={`text-[16px] font-bold tracking-[0.02px] ${TA}`}>Predefined Coordinate Reference Systems</div>
                <div className={`flex items-center pb-[4px] text-[17.3px] ${TA}`}><Check /><span className="ml-[8px] w-[174px] whitespace-nowrap pt-[2px]">Hide deprecated CRSs</span></div>
              </div>
              <div className="flex h-[282px] shrink-0 flex-col border border-[#b4b4b4] bg-white text-[17.5px] leading-[25px]">
                <Header />
                <div className="flex h-[27px] shrink-0 items-center pl-[9px]">
                  <Tri d="down" />
                  <svg viewBox="0 0 24 24" className="mb-[2px] ml-[12px] h-[24px] w-[24px]">
                    <rect x="1" y="1" width="22" height="22" rx="1" fill="#fff" stroke="#111" strokeWidth="1.6" />
                    <path d="M7 1 V23 M12 1 V23 M17.5 1 V23 M1 7 H23 M1 12.5 H23 M1 18 H23" stroke="#222" strokeWidth="1.2" />
                  </svg>
                  <span className="ml-[6px] pt-[2px] text-[17.5px] font-bold italic tracking-[-0.02px]">Projected Coordinate Systems</span>
                </div>
                <div className="flex h-[27px] shrink-0 items-center bg-[#e8e7e3] pl-[39px]"><Tri d="down" /><span className="ml-[12px] pt-[2px] italic tracking-[0.12px]">Lambert Conformal Conic</span></div>
                <div className="flex h-[27px] shrink-0 items-center pl-[93px] pt-[2px]"><span className="w-[310px] whitespace-nowrap tracking-[-0.12px]">NAD_1983_HARN_Adj_WI_Marquett...</span><span className="text-[17px] tracking-[0.1px]">ESRI:103857</span></div>
                <div className="flex h-[27px] shrink-0 items-center bg-[#e8e7e3] pl-[39px]"><Tri d="down" /><span className="ml-[12px] pt-[2px] italic tracking-[-0.02px]">Mercator</span></div>
                <div className="flex h-[27px] shrink-0 items-center bg-[#efefef] pl-[93px] pt-[2px]"><span className="w-[310px] tracking-[-0.07px]">WGS 84 / Pseudo-Mercator</span><span className="text-[17px] tracking-[-0.05px]">EPSG:3857</span></div>
                <HScroll />
              </div>
              <div className="flex h-[6px] shrink-0 items-start pt-[2px]"><Dots /></div>
              <div className="flex h-[138px] shrink-0 justify-between">
                <div className="flex w-[317px] overflow-hidden border border-[#b4b4b4] bg-white">
                  <div className="flex-1 overflow-hidden pl-[4px] pt-[4px]">
                    <div className={`h-[18px] text-[14px] font-bold leading-[19px] ${TA}`}>WGS 84 / Pseudo-Mercator</div>
                    <div className={`mt-[12px] h-[19px] text-[16px] font-bold leading-[20px] ${TA}`}>WKT</div>
                    <pre className="ml-[30px] font-['Liberation_Mono',monospace] text-[15.5px] leading-[18px] tracking-[0.7px]">{`PROJCRS["WGS 84 / Pseudo-
Mercator",
    BASEGEOGCRS["WGS 84",
        DATUM["World Geod
etic System 1984",`}</pre>
                  </div>
                  <div className="flex w-[21px] shrink-0 flex-col border-l border-[#b4b4b4] bg-[#e4e4e4]">
                    <div className="flex h-[21px] items-center justify-center border-b border-[#b4b4b4] bg-[#f7f7f7]"><Tri d="up" /></div>
                    <div className="h-[40px] border-b border-[#b4b4b4] bg-linear-to-r from-white to-[#f0f0f0]" />
                    <div className="mt-auto flex h-[21px] items-center justify-center border-t border-[#b4b4b4] bg-[#f7f7f7]"><Tri d="down" /></div>
                  </div>
                </div>
                <div className="w-[317px] overflow-hidden border border-[#b4b4b4] bg-white"><WorldMap /></div>
              </div>
            </div>
            <div className="mt-[22px] flex gap-[9px] pl-[337px]">
              <Button primary>OK</Button><Button>Cancel</Button><Button>Apply</Button><Button>Help</Button>
            </div>
          </div>
        </div>
      </div>
    </div>
  );
}
